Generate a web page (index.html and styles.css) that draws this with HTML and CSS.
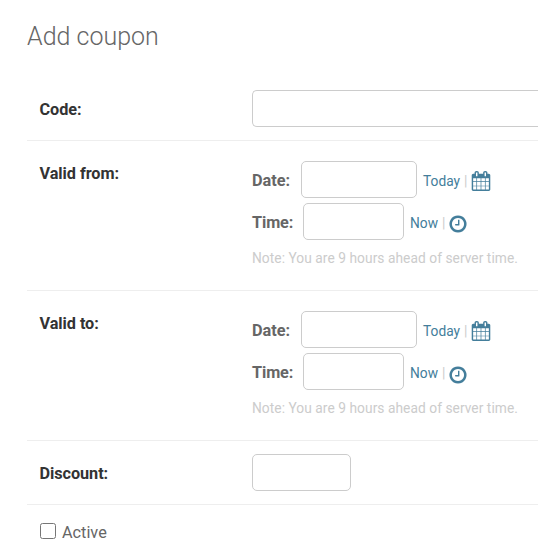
FILE: index.html
```html
<!DOCTYPE html>
<html lang="en">
<head>
<meta charset="utf-8">
<title>Add coupon</title>
<link rel="stylesheet" href="styles.css">
</head>
<body>
<svg class="symbols" aria-hidden="true">
<symbol id="calendar" viewBox="0 0 1792 1792"><path d="M192 1664h288v-288h-288v288zm352 0h320v-288h-320v288zm-352-352h288v-320h-288v320zm352 0h320v-320h-320v320zm-352-384h288v-288h-288v288zm736 736h320v-288h-320v288zm-384-736h320v-288h-320v288zm768 736h288v-288h-288v288zm-384-352h320v-320h-320v320zm-352-864v-288q0-13-9.500-22.500t-22.500-9.500h-64q-13 0-22.500 9.500t-9.500 22.500v288q0 13 9.500 22.500t22.500 9.500h64q13 0 22.500-9.500t9.500-22.500zm736 864h288v-320h-288v320zm-384-384h320v-288h-320v288zm384 0h288v-288h-288v288zm32-480v-288q0-13-9.500-22.500t-22.500-9.500h-64q-13 0-22.500 9.500t-9.500 22.500v288q0 13 9.500 22.500t22.500 9.500h64q13 0 22.500-9.500t9.500-22.500zm384-64v1280q0 52-38 90t-90 38h-1408q-52 0-90-38t-38-90v-1280q0-52 38-90t90-38h128v-96q0-66 47-113t113-47h64q66 0 113 47t47 113v96h384v-96q0-66 47-113t113-47h64q66 0 113 47t47 113v96h128q52 0 90 38t38 90z"/></symbol>
<symbol id="clock" viewBox="0 0 1792 1792"><path d="M1024 544v448q0 14-9 23t-23 9h-320q-14 0-23-9t-9-23v-64q0-14 9-23t23-9h224v-352q0-14 9-23t23-9h64q14 0 23 9t9 23zm416 352q0-148-73-273t-198-198-273-73-273 73-198 198-73 273 73 273 198 198 273 73 273-73 198-198 73-273zm224 0q0 209-103 385.500t-279.500 279.500-385.500 103-385.500-103-279.500-279.500-103-385.500 103-385.500 279.500-279.500 385.500-103 385.500 103 279.500 279.500 103 385.500z"/></symbol>
</svg>
<main class="content">
  <h1>Add coupon</h1>
  <form>
    <div class="row row-code">
      <label class="name" for="code">Code:</label>
      <input class="field code" id="code" type="text">
    </div>
    <div class="row row-datetime">
      <span class="name">Valid from:</span>
      <div class="datetime">
        <div class="line"><label class="part" for="from-date">Date:</label><input class="field date" id="from-date" type="text"><span class="shortcuts"><a>Today</a><i>|</i><svg class="icon"><use href="#calendar"/></svg></span></div>
        <div class="line"><label class="part part-time" for="from-time">Time:</label><input class="field time" id="from-time" type="text"><span class="shortcuts"><a>Now</a><i>|</i><svg class="icon clock"><use href="#clock"/></svg></span></div>
        <p class="note">Note: You are 9 hours ahead of server time.</p>
      </div>
    </div>
    <div class="row row-datetime">
      <span class="name">Valid to:</span>
      <div class="datetime">
        <div class="line"><label class="part" for="to-date">Date:</label><input class="field date" id="to-date" type="text"><span class="shortcuts"><a>Today</a><i>|</i><svg class="icon"><use href="#calendar"/></svg></span></div>
        <div class="line"><label class="part part-time" for="to-time">Time:</label><input class="field time" id="to-time" type="text"><span class="shortcuts"><a>Now</a><i>|</i><svg class="icon clock clock-low"><use href="#clock"/></svg></span></div>
        <p class="note">Note: You are 9 hours ahead of server time.</p>
      </div>
    </div>
    <div class="row row-discount">
      <label class="name" for="discount">Discount:</label>
      <input class="field discount" id="discount" type="text">
    </div>
    <div class="row row-active">
      <input class="check" id="active" type="checkbox"><label for="active">Active</label>
    </div>
  </form>
</main>
</body>
</html>
```
FILE: styles.css
```css
* {
  box-sizing: border-box;
}

body {
  margin: 0;
  background: #fff;
  color: #666;
  font-family: Roboto, "Liberation Sans", sans-serif;
  font-size: 16.25px;
}

.symbols {
  display: none;
}

.content {
  padding: 22px 0 0 27px;
}

h1 {
  margin: 0;
  height: 55px;
  font-size: 25px;
  font-weight: 300;
  line-height: 29px;
}

.row {
  display: flex;
  align-items: flex-start;
  padding: 13px 0 0 12.5px;
  border-bottom: 1px solid #eee;
}

.row-code {
  height: 64px;
}

.row-datetime {
  height: 150px;
}

.row-discount {
  height: 64px;
}

.row-active {
  height: 51px;
  padding-top: 18px;
  border-bottom: 0;
  line-height: 19px;
}

.name {
  flex: none;
  width: 212.5px;
  padding-top: 10px;
  color: #333;
  font-weight: 700;
  font-size: 16.25px;
  line-height: 19px;
  letter-spacing: -0.06px;
}

.field {
  flex: none;
  height: 37px;
  border: 1px solid #ccc;
  border-radius: 5px;
  background: #fff;
}

.code {
  flex: 1;
  min-width: 0;
  border-right: 0;
  border-radius: 5px 0 0 5px;
}

.discount {
  width: 99px;
}

.datetime {
  padding-top: 7px;
}

.line {
  display: flex;
  align-items: center;
  height: 37px;
  margin-bottom: 5px;
}

.part {
  width: 49px;
  padding-top: 2px;
  font-weight: 700;
  line-height: 19px;
}

.part-time {
  width: 51px;
  letter-spacing: -0.12px;
}

.date {
  width: 116px;
}

.time {
  width: 101px;
}

.shortcuts {
  display: flex;
  align-items: center;
  margin-left: 6px;
  padding-top: 3px;
  font-size: 13.75px;
  line-height: 16px;
  color: #ccc;
}

.shortcuts a {
  color: #447e9b;
}

.shortcuts i {
  margin: 0 4px;
  font-style: normal;
}

.icon {
  width: 20px;
  height: 20px;
  fill: #447e9b;
}

.clock {
  margin: 2px 0 0 0;
}

.clock-low {
  margin-top: 4px;
}

.shortcuts .clock {
  margin-left: -1px;
}

.note {
  margin: 10px 0 0;
  color: #ccc;
  font-size: 13.75px;
  line-height: 17px;
  letter-spacing: 0.05px;
}

.check {
  width: 16px;
  height: 16px;
  margin: 0 6.5px 0 0;
}
```
